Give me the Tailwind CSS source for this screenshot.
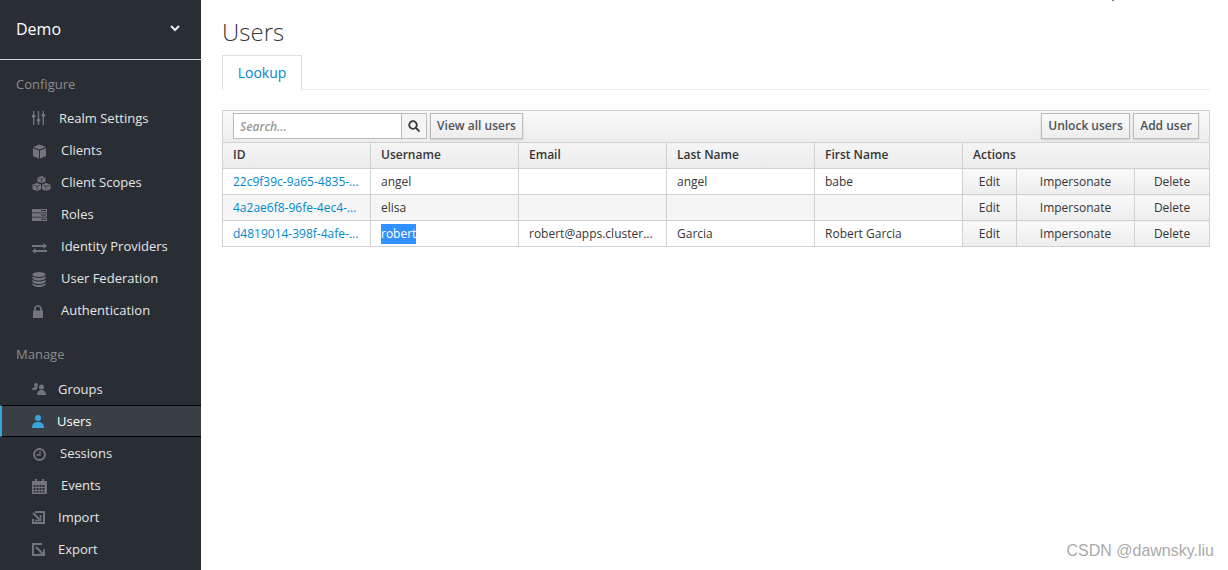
<!DOCTYPE html>
<html lang="en">
  <head>
    <meta charset="UTF-8" />
    <title>Users</title>
    <script src="https://cdn.jsdelivr.net/npm/@tailwindcss/browser@4"></script>
  </head>
  <body class="relative h-[570px] w-[1228px] overflow-hidden bg-white font-['Open_Sans',sans-serif] text-[#363636]">
    <div class="flex h-[570px]">
      <!-- sidebar -->
      <aside class="w-[201px] shrink-0 bg-[#292e34] text-[13px] text-[#e4e5e6]">
        <div class="flex h-[60px] items-center justify-between border-b border-[#d1d1d1] pr-[21px] pl-4 pb-[2px] text-[16px] text-white">
          <span>Demo</span>
          <svg width="10" height="7" viewBox="0 0 10 7" fill="none" stroke="#f0f0f0" stroke-width="2"><path d="M1 1l4 4 4-4" /></svg>
        </div>
        <div class="flex h-[42px] items-center pl-4 pt-[7px] text-[#8b8d8f]">Configure</div>
        <ul>
          <li class="flex h-8 items-center pl-8">
            <svg class="mr-[13px] w-[14px]" width="14" height="14" viewBox="0 0 14 14" fill="#72767b"><path d="M1 0h1.400v14H1zM5.800 0h1.400v14H5.800zM10.600 0h1.400v14h-1.400z" /><path d="M0 4h3.400v2.500H0zM4.800 8h3.400v2.500H4.800zM9.600 3h3.400v2.500H9.600z" /></svg>
            <span class="pt-[2px]">Realm Settings</span>
          </li>
          <li class="flex h-8 items-center pl-8">
            <svg class="mt-[3px] mr-[14px] w-[15px]" width="15" height="15" viewBox="0 0 15 15" fill="#72767b"><path d="M7.500 0.500l6.500 2.500-6.500 2.500L1 3zM1 4.200l6 2.300v8L1 12zM8 6.500l6-2.300V12l-6 2.500z" /></svg>
            <span class="pt-[2px]">Clients</span>
          </li>
          <li class="flex h-8 items-center pl-8">
            <svg class="mt-[3px] mr-[10px] w-[19px]" width="19" height="15" viewBox="0 0 19 15" fill="#72767b"><path d="M9.500 0l4 1.500v4l-4 1.700-4-1.700v-4zM5 7l4 1.500v4.800L5 15l-4.500-1.700V8.500zM14 7l4.500 1.500v4.800L14 15l-4-1.700V8.500z" /><path d="M6.500 2l3 1.200 3-1.200M9.500 3.200v3.400M1.500 9.200l3.500 1.200 3-1.200M5 10.400v3.800M10.800 9.200l3.200 1.200 3.500-1.200M14 10.400v3.800" fill="none" stroke="#292e34" stroke-width="0.700" /></svg>
            <span class="pt-[2px]">Client Scopes</span>
          </li>
          <li class="flex h-8 items-center pl-8">
            <svg class="mt-[2px] mr-[14px] w-[15px]" width="15" height="12" viewBox="0 0 15 12" fill="#72767b"><path d="M0 0h15v3.500H0zM0 4.300h15v3.400H0zM0 8.500h15V12H0z" /><path d="M9 1h5v1H9zM9 5.500h5v1H9zM9 9.700h5v1H9z" fill="#292e34" /></svg>
            <span class="pt-[2px]">Roles</span>
          </li>
          <li class="flex h-8 items-center pl-8">
            <svg class="mt-[5px] mr-[14px] w-[15px]" width="15" height="11" viewBox="0 0 15 11" fill="#72767b"><path d="M0 2h11.500V0L15 3l-3.500 3V4H0zM15 7H3.500V5L0 8l3.500 3V9H15z" /></svg>
            <span class="pt-[2px]">Identity Providers</span>
          </li>
          <li class="flex h-8 items-center pl-8">
            <svg class="mt-[3px] mr-[15px] w-[14px]" width="14" height="15" viewBox="0 0 14 15" fill="#72767b"><ellipse cx="7" cy="2.500" rx="6.500" ry="2.500" /><path d="M0.500 4v2c0 1.300 3 2.500 6.500 2.500s6.500-1.200 6.500-2.500V4c-1 1.500-4 2-6.500 2S1.500 5.500 0.500 4zM0.500 7.500v2c0 1.300 3 2.500 6.500 2.500s6.500-1.200 6.500-2.500v-2c-1 1.500-4 2-6.500 2s-5.500-.5-6.500-2zM0.500 11v1.500C0.500 13.800 3.500 15 7 15s6.500-1.200 6.500-2.500V11c-1 1.500-4 2-6.500 2s-5.500-.5-6.500-2z" /></svg>
            <span class="pt-[2px]">User Federation</span>
          </li>
          <li class="flex h-8 items-center pl-8">
            <svg class="mt-[2px] mr-[17px] w-[12px]" width="12" height="13" viewBox="0 0 12 13" fill="none"><path d="M3 6V4a3 3 0 0 1 6 0v2" stroke="#72767b" stroke-width="1.600" /><path d="M1 5.500h10V13H1z" fill="#72767b" /></svg>
            <span class="pt-[2px]">Authentication</span>
          </li>
        </ul>
        <div class="flex h-[47px] items-center pl-4 pt-[11px] text-[#8b8d8f]">Manage</div>
        <ul>
          <li class="flex h-8 items-center pl-8">
            <svg class="mr-[12px] w-[14px]" width="14" height="12" viewBox="0 0 14 12" fill="#72767b"><circle cx="4" cy="2" r="2" /><path d="M0 7c0-2 1.500-3 4-3 1 0 1.500.2 2 .5C5 5.500 4.500 6 4.300 7z" /><circle cx="9.500" cy="4" r="2.500" /><path d="M5 12c0-3.500 2-5 4.500-5s4.500 1.500 4.500 5z" /></svg>
            <span class="pt-[2px]">Groups</span>
          </li>
          <li class="box-border flex h-8 items-center border-y border-black border-l-[2px] border-l-[#39a5dc] bg-[#393f44] pl-[30px] text-white">
            <svg class="mr-[13px] w-[12px]" width="12" height="13" viewBox="0 0 12 13" fill="#39a5dc"><circle cx="6" cy="3" r="3" /><path d="M0 13c0-4 2-6 6-6s6 2 6 6z" /></svg>
            <span class="pt-[2px]">Users</span>
          </li>
          <li class="flex h-8 items-center pl-8">
            <svg class="mt-[3px] ml-[1px] mr-[14px] w-[13px]" width="13" height="13" viewBox="0 0 13 13" fill="none" stroke="#72767b"><circle cx="6.500" cy="6.500" r="5.500" stroke-width="1.800" /><path d="M7 3v4H3.500" stroke-width="1.300" /></svg>
            <span class="pt-[2px]">Sessions</span>
          </li>
          <li class="flex h-8 items-center pl-8">
            <svg class="mt-[3px] mr-[14px] w-[15px]" width="15" height="15" viewBox="0 0 15 15" fill="#72767b"><path d="M0 2h3V0h2v2h5V0h2v2h3v13H0z" /><path d="M1.500 6h2v2h-2zM4.500 6h2v2h-2zM7.500 6h2v2h-2zM10.500 6h2v2h-2zM1.500 9h2v2h-2zM4.500 9h2v2h-2zM7.500 9h2v2h-2zM10.500 9h2v2h-2zM1.500 12h2v1.500h-2zM4.500 12h2v1.500h-2zM7.500 12h2v1.500h-2zM10.500 12h2v1.500h-2z" fill="#292e34" /></svg>
            <span class="pt-[2px]">Events</span>
          </li>
          <li class="flex h-8 items-center pl-8">
            <svg class="mr-[13px] w-[13px]" width="13" height="13" viewBox="0 0 13 13" fill="none" stroke="#72767b" stroke-width="2"><path d="M3 1h9v11H1V8" /><path d="M1 2l6.500 6.500" /><path d="M8.500 4v5.500H3" stroke-width="1.600" /></svg>
            <span class="pt-[2px]">Import</span>
          </li>
          <li class="flex h-8 items-center pl-8">
            <svg class="mr-[13px] w-[13px]" width="13" height="13" viewBox="0 0 13 13" fill="none" stroke="#72767b" stroke-width="2"><path d="M12 9v3H1V1h9" /><path d="M4 4l8 8" /><path d="M6.500 11.500H12V6" stroke-width="1.600" /></svg>
            <span class="pt-[2px]">Export</span>
          </li>
        </ul>
      </aside>

      <!-- content -->
      <main class="w-[1027px] pl-[21px] pr-[18px]">
        <h1 class="h-[55px] pt-[15px] text-[24px] leading-[34px] font-light text-[#363636]">Users</h1>
        <div class="h-[35px] border-b border-[#ececec]">
          <div class="flex h-[35px] w-[80px] items-center justify-center border-x border-t border-[#dedede] bg-white pb-[2px] text-[14px] text-[#0088ce]">Lookup</div>
        </div>

        <div class="mt-5 text-[12px]">
          <div class="flex h-[32px] items-start border-x border-t border-[#d1d1d1] bg-gradient-to-b from-[#fafafa] to-[#ededed] px-[10px] pt-[2px]">
            <div class="flex h-[26px] w-[194px] border border-[#bbb]">
              <div class="flex-1 bg-white pt-[1px] pl-[6px] text-[12px] leading-[24px] font-semibold text-[#999] italic">Search...</div>
              <div class="flex w-[25px] items-center justify-center border-l border-[#bbb] bg-[#f5f5f5]">
                <svg width="12" height="12" viewBox="0 0 12 12" fill="none" stroke="#363636" stroke-width="1.800"><circle cx="5" cy="5" r="3.800" /><path d="M8 8l3.500 3.500" /></svg>
              </div>
            </div>
            <div class="ml-[3px] flex h-[26px] w-[93px] items-center justify-center border border-[#bbb] bg-gradient-to-b from-[#fafafa] to-[#ededed] font-semibold text-[#4d5258] shadow-[0_1px_2px_rgba(0,0,0,0.15)]">View all users</div>
            <div class="ml-auto flex h-[26px] w-[89px] items-center justify-center border border-[#bbb] bg-gradient-to-b from-[#fafafa] to-[#ededed] font-semibold text-[#4d5258] shadow-[0_1px_2px_rgba(0,0,0,0.15)]">Unlock users</div>
            <div class="ml-[3px] flex h-[26px] w-[66px] items-center justify-center border border-[#bbb] bg-gradient-to-b from-[#fafafa] to-[#ededed] font-semibold text-[#4d5258] shadow-[0_1px_2px_rgba(0,0,0,0.15)]">Add user</div>
          </div>

          <table class="w-[987px] table-fixed border-collapse">
            <colgroup>
              <col class="w-[148px]" /><col class="w-[148px]" /><col class="w-[148px]" /><col class="w-[148px]" /><col class="w-[148px]" />
              <col class="w-[54px]" /><col class="w-[118px]" /><col class="w-[75px]" />
            </colgroup>
            <thead class="bg-gradient-to-b from-[#f5f5f5] to-[#ececec]">
              <tr class="h-[26px] text-left">
                <th class="border border-[#d1d1d1] pb-[2px] pl-[10px] font-semibold">ID</th>
                <th class="border border-[#d1d1d1] pb-[2px] pl-[10px] font-semibold">Username</th>
                <th class="border border-[#d1d1d1] pb-[2px] pl-[10px] font-semibold">Email</th>
                <th class="border border-[#d1d1d1] pb-[2px] pl-[10px] font-semibold">Last Name</th>
                <th class="border border-[#d1d1d1] pb-[2px] pl-[10px] font-semibold">First Name</th>
                <th colspan="3" class="border border-[#d1d1d1] pb-[2px] pl-[10px] font-semibold">Actions</th>
              </tr>
            </thead>
            <tbody>
              <tr class="h-[26px] bg-white">
                <td class="border border-[#d1d1d1] pl-[10px] text-[#0088ce]">22c9f39c-9a65-4835-...</td>
                <td class="border border-[#d1d1d1] pl-[10px]">angel</td>
                <td class="border border-[#d1d1d1] pl-[10px]"></td>
                <td class="border border-[#d1d1d1] pl-[10px]">angel</td>
                <td class="border border-[#d1d1d1] pl-[10px]">babe</td>
                <td class="border border-[#d1d1d1] bg-gradient-to-b from-[#fafafa] to-[#ededed] text-center">Edit</td>
                <td class="border border-[#d1d1d1] bg-gradient-to-b from-[#fafafa] to-[#ededed] text-center">Impersonate</td>
                <td class="border border-[#d1d1d1] bg-gradient-to-b from-[#fafafa] to-[#ededed] text-center">Delete</td>
              </tr>
              <tr class="h-[26px] bg-[#f5f5f5]">
                <td class="border border-[#d1d1d1] pl-[10px] text-[#0088ce]">4a2ae6f8-96fe-4ec4-...</td>
                <td class="border border-[#d1d1d1] pl-[10px]">elisa</td>
                <td class="border border-[#d1d1d1] pl-[10px]"></td>
                <td class="border border-[#d1d1d1] pl-[10px]"></td>
                <td class="border border-[#d1d1d1] pl-[10px]"></td>
                <td class="border border-[#d1d1d1] bg-gradient-to-b from-[#fafafa] to-[#ededed] text-center">Edit</td>
                <td class="border border-[#d1d1d1] bg-gradient-to-b from-[#fafafa] to-[#ededed] text-center">Impersonate</td>
                <td class="border border-[#d1d1d1] bg-gradient-to-b from-[#fafafa] to-[#ededed] text-center">Delete</td>
              </tr>
              <tr class="h-[26px] bg-white">
                <td class="border border-[#d1d1d1] pl-[10px] text-[#0088ce]">d4819014-398f-4afe-...</td>
                <td class="border border-[#d1d1d1] pl-[10px]"><span class="inline-block h-[20px] bg-[#3390ff] leading-[20px] text-white">robert</span></td>
                <td class="border border-[#d1d1d1] pl-[10px]">robert@apps.cluster...</td>
                <td class="border border-[#d1d1d1] pl-[10px]">Garcia</td>
                <td class="border border-[#d1d1d1] pl-[10px]">Robert Garcia</td>
                <td class="border border-[#d1d1d1] bg-gradient-to-b from-[#fafafa] to-[#ededed] text-center">Edit</td>
                <td class="border border-[#d1d1d1] bg-gradient-to-b from-[#fafafa] to-[#ededed] text-center">Impersonate</td>
                <td class="border border-[#d1d1d1] bg-gradient-to-b from-[#fafafa] to-[#ededed] text-center">Delete</td>
              </tr>
            </tbody>
          </table>
        </div>
      </main>
    </div>

    <!-- cut off mark at top edge, watermark -->
    <div class="absolute top-0 left-[1112px] h-[1px] w-[2px] bg-[#777]"></div>
    <div class="absolute right-[14px] bottom-[9px] font-['Liberation_Sans',sans-serif] text-[16px] leading-[20px] text-[#aaa]">CSDN @dawnsky.liu</div>
  </body>
</html>
